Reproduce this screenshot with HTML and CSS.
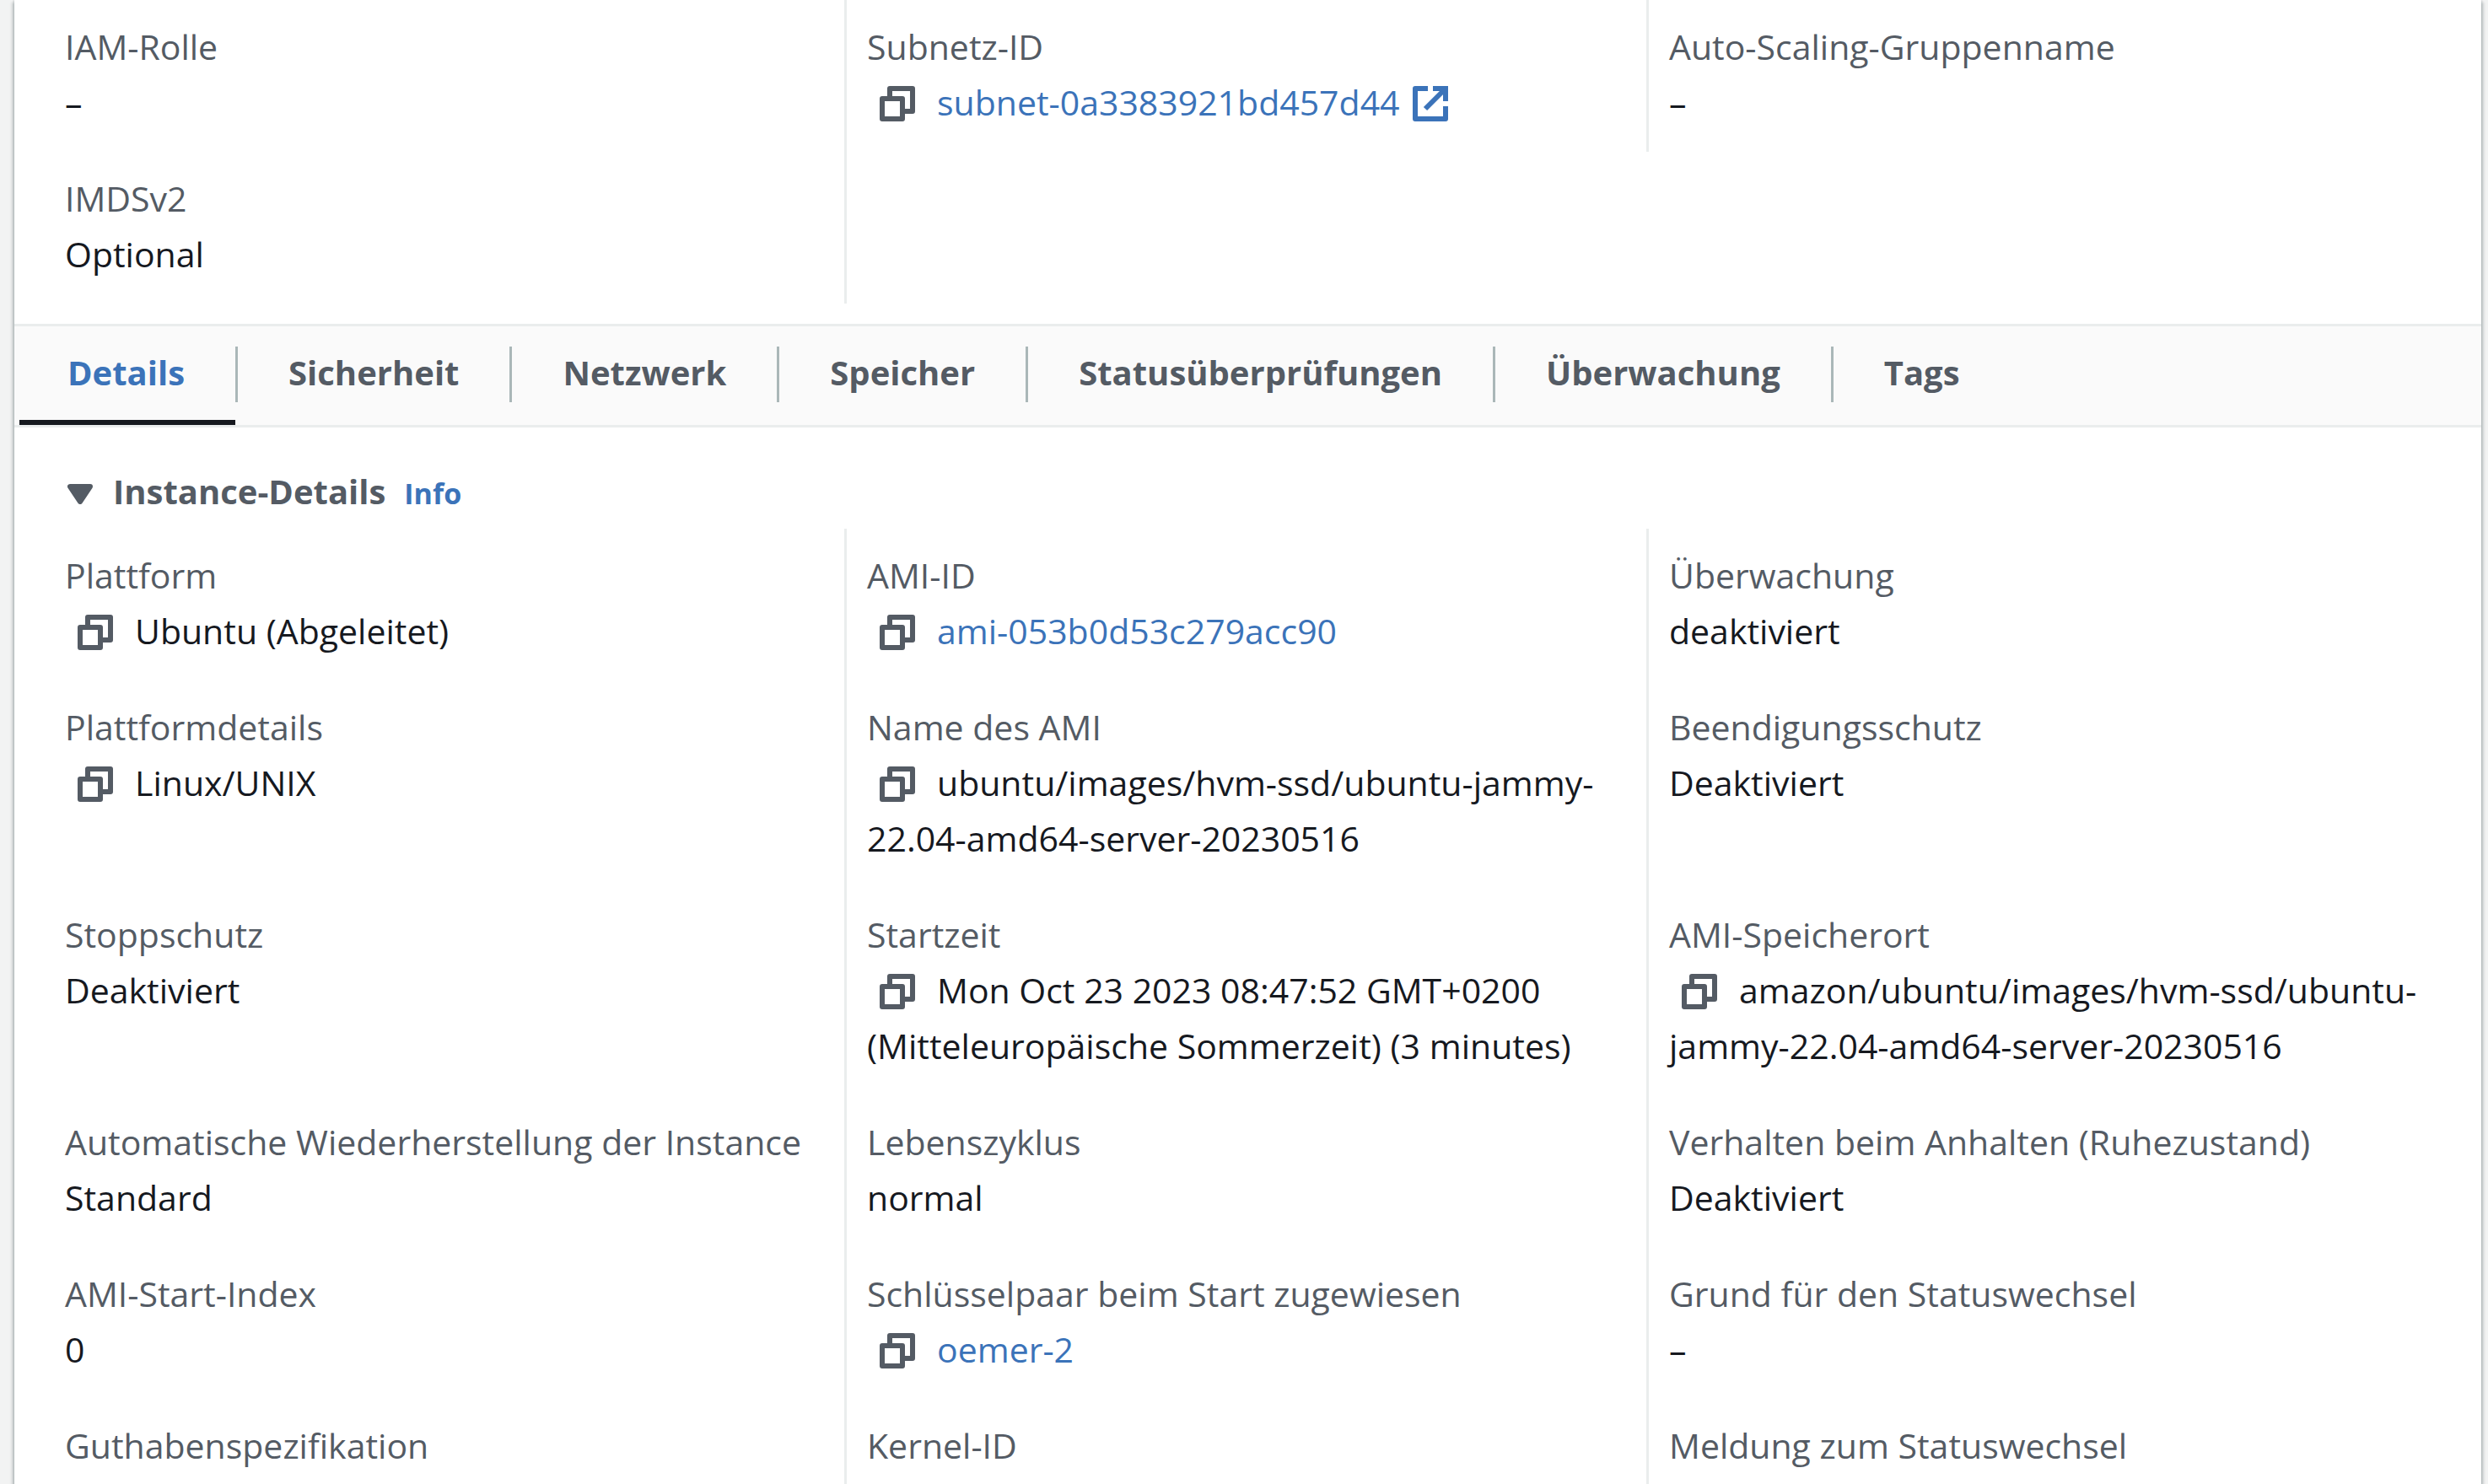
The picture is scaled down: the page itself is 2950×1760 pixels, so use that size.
FILE: index.html
```html
<!DOCTYPE html>
<html lang="de">
<head>
<meta charset="utf-8">
<meta name="viewport" content="width=device-width, initial-scale=1">
<title>Instance-Details</title>
<link rel="stylesheet" href="styles.css">
</head>
<body>
<svg class="sprite" aria-hidden="true">
  <symbol id="copy" viewBox="0 0 16 16"><path class="icon-line" d="M2 6h8v8H2z"/><path class="icon-line" d="M5 5V2h9v9h-4"/></symbol>
  <symbol id="external" viewBox="0 0 16 16"><path class="icon-line" d="M7 2H2v12h12V9"/><path class="icon-line sharp" d="M9 2h5v5M14 2L6 10"/></symbol>
</svg>
<main class="panel">
  <dl class="grid">
    <div class="cell"><dt>IAM-Rolle</dt><dd>–</dd></div>
    <div class="cell"><dt>Subnetz-ID</dt><dd><button class="copy" aria-label="Kopieren"><svg class="icon"><use href="#copy"/></svg></button><a href="#">subnet-0a3383921bd457d44<svg class="icon external"><use href="#external"/></svg></a></dd></div>
    <div class="cell"><dt>Auto-Scaling-Gruppenname</dt><dd>–</dd></div>
    <div class="cell"><dt>IMDSv2</dt><dd>Optional</dd></div>
  </dl>

  <nav class="tabs" role="tablist">
    <div class="tab"><button role="tab" aria-selected="true">Details</button></div>
    <div class="tab"><button role="tab">Sicherheit</button></div>
    <div class="tab"><button role="tab">Netzwerk</button></div>
    <div class="tab"><button role="tab">Speicher</button></div>
    <div class="tab"><button role="tab">Statusüberprüfungen</button></div>
    <div class="tab"><button role="tab">Überwachung</button></div>
    <div class="tab"><button role="tab">Tags</button></div>
  </nav>

  <section>
    <header class="section-head">
      <button class="toggle" aria-expanded="true"><svg class="caret" viewBox="0 0 30 24"><path d="M3 3h24L15 21z"/></svg><span>Instance-Details</span></button>
      <a class="info" href="#">Info</a>
    </header>
    <dl class="grid">
      <div class="cell"><dt>Plattform</dt><dd><button class="copy" aria-label="Kopieren"><svg class="icon"><use href="#copy"/></svg></button>Ubuntu (Abgeleitet)</dd></div>
      <div class="cell"><dt>AMI-ID</dt><dd><button class="copy" aria-label="Kopieren"><svg class="icon"><use href="#copy"/></svg></button><a href="#">ami-053b0d53c279acc90</a></dd></div>
      <div class="cell"><dt>Überwachung</dt><dd>deaktiviert</dd></div>

      <div class="cell"><dt>Plattformdetails</dt><dd><button class="copy" aria-label="Kopieren"><svg class="icon"><use href="#copy"/></svg></button>Linux/UNIX</dd></div>
      <div class="cell"><dt>Name des AMI</dt><dd><button class="copy" aria-label="Kopieren"><svg class="icon"><use href="#copy"/></svg></button>ubuntu/images/hvm-ssd/ubuntu-jammy-<wbr>22.04-amd64-server-20230516</dd></div>
      <div class="cell"><dt>Beendigungsschutz</dt><dd>Deaktiviert</dd></div>

      <div class="cell"><dt>Stoppschutz</dt><dd>Deaktiviert</dd></div>
      <div class="cell"><dt>Startzeit</dt><dd><button class="copy" aria-label="Kopieren"><svg class="icon"><use href="#copy"/></svg></button>Mon Oct 23 2023 08:47:52 GMT+0200 (Mitteleuropäische Sommerzeit) (3 minutes)</dd></div>
      <div class="cell"><dt>AMI-Speicherort</dt><dd><button class="copy" aria-label="Kopieren"><svg class="icon"><use href="#copy"/></svg></button>amazon/ubuntu/images/hvm-ssd/ubuntu-jammy-22.04-amd64-server-20230516</dd></div>

      <div class="cell"><dt>Automatische Wiederherstellung der Instance</dt><dd>Standard</dd></div>
      <div class="cell"><dt>Lebenszyklus</dt><dd>normal</dd></div>
      <div class="cell"><dt>Verhalten beim Anhalten (Ruhezustand)</dt><dd>Deaktiviert</dd></div>

      <div class="cell"><dt>AMI-Start-Index</dt><dd>0</dd></div>
      <div class="cell"><dt>Schlüsselpaar beim Start zugewiesen</dt><dd><button class="copy" aria-label="Kopieren"><svg class="icon"><use href="#copy"/></svg></button><a href="#">oemer-2</a></dd></div>
      <div class="cell"><dt>Grund für den Statuswechsel</dt><dd>–</dd></div>

      <div class="cell"><dt>Guthabenspezifikation</dt></div>
      <div class="cell"><dt>Kernel-ID</dt></div>
      <div class="cell"><dt>Meldung zum Statuswechsel</dt></div>
    </dl>
  </section>
</main>
</body>
</html>
```
FILE: styles.css
```css
* {
  box-sizing: border-box;
}

body {
  margin: 0;
  padding: 0 8px 0 17px;
  background: #f2f3f3;
  color: #16191f;
  font: 41px/66px "Open Sans", "Noto Sans", sans-serif;
}

button {
  border: 0;
  padding: 0;
  background: none;
  color: inherit;
  font: inherit;
  cursor: pointer;
}

a {
  color: #3b73b9;
  text-decoration: none;
}

.sprite {
  display: none;
}

.panel {
  min-height: 100vh;
  background: #fff;
  box-shadow: 0 0 3px rgba(0, 28, 36, 0.3), 3px 3px 3px rgba(0, 28, 36, 0.15), -3px 3px 3px rgba(0, 28, 36, 0.15), 0 -6px 0 #fff;
}

/* Label and value columns */
.grid {
  display: grid;
  grid-template-columns: repeat(3, minmax(0, 1fr));
  margin: 0;
  padding: 0 36px;
}

.cell {
  padding: 22px 24px 26px;
  border-right: 3px solid #eaeded;
}

.cell:nth-child(3n) {
  border-right-color: transparent;
}

dt {
  color: #545b64;
}

dd {
  margin: 0;
}

.icon {
  width: 48px;
  height: 48px;
  vertical-align: -10px;
}

.icon-line {
  fill: none;
  stroke: currentColor;
  stroke-width: 2;
  stroke-linejoin: round;
}

.sharp {
  stroke-linejoin: miter;
}

.copy {
  margin: 0 23px 0 12px;
  color: #545b64;
  line-height: 48px;
}

.external {
  margin-left: 12px;
}

/* Tabs */
.tabs {
  display: flex;
  margin-top: 24px;
  padding-left: 3px;
  border-top: 3px solid #eaeded;
  border-bottom: 3px solid #eaeded;
  background: #fafafa;
  color: #545b64;
  font-size: 40px;
  font-weight: 700;
}

.tab {
  display: flex;
}

.tab:not(:last-child)::after {
  content: "";
  width: 3px;
  height: 66px;
  margin-top: 24px;
  background: #aab7b8;
}

.tab button {
  position: relative;
  padding: 22px 60px 29px;
}

.tab button[aria-selected="true"] {
  color: #3b73b9;
}

.tab button[aria-selected="true"]::after {
  content: "";
  position: absolute;
  right: 0;
  bottom: 0;
  left: 3px;
  height: 6px;
  background: #16191f;
}

/* Section heading */
.section-head {
  display: flex;
  align-items: baseline;
  gap: 22px;
  padding: 43px 60px 11px 63px;
  font-size: 40px;
  font-weight: 700;
}

.toggle {
  display: flex;
  align-items: baseline;
  gap: 24px;
  color: #545b64;
}

.caret {
  width: 30px;
  height: 24px;
  margin-bottom: 3px;
  fill: currentColor;
  stroke: currentColor;
  stroke-width: 6;
  stroke-linejoin: round;
}

.info {
  font-size: 34px;
  line-height: 48px;
}
```
